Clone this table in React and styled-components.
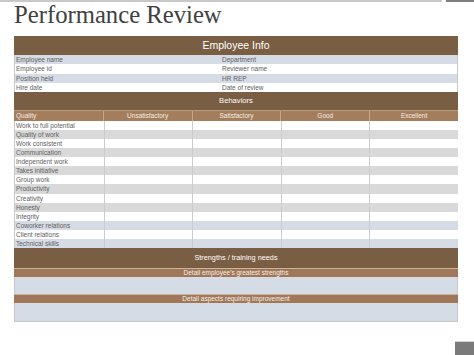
import React from 'react';
import styled, { createGlobalStyle } from 'styled-components';

const GlobalStyle = createGlobalStyle`
  body {
    margin: 0;
    background: #ffffff;
    font-family: "Liberation Sans", Arial, sans-serif;
  }
`;

const info = [
  ['Employee name', 'Department'],
  ['Employee id', 'Reviewer name'],
  ['Position held', 'HR REP'],
  ['Hire date', 'Date of review'],
];

const columns = ['Quality', 'Unsatisfactory', 'Satisfactory', 'Good', 'Excellent'];

const qualities = [
  ['Work to full potential', 'white'],
  ['Quality of work', 'gray'],
  ['Work consistent', 'white'],
  ['Communication', 'gray'],
  ['Independent work', 'white'],
  ['Takes initiative', 'gray'],
  ['Group work', 'white'],
  ['Productivity', 'gray'],
  ['Creativity', 'white'],
  ['Honesty', 'gray'],
  ['Integrity', 'white'],
  ['Coworker relations', 'blue'],
  ['Client relations', 'white'],
  ['Technical skills', 'blue'],
];

const shades = {
  white: '#ffffff',
  gray: '#d9d9d9',
  blue: '#d6dce5',
};

const App = () => {
  return (
    <Page>
      <GlobalStyle />
      <TopBar>
        <LightStrip />
        <DarkStrip />
      </TopBar>
      <Title>Performance Review</Title>
      <Sheet>
        <Banner $height={19} $size={10.5}>Employee Info</Banner>
        {info.map((row, i) => (
          <InfoRow key={row[0]} $alt={i % 2 === 0}>
            <InfoCell>{row[0]}</InfoCell>
            <InfoCell>{row[1]}</InfoCell>
          </InfoRow>
        ))}
        <Banner $height={18} $size={7.6}>Behaviors</Banner>
        <HeadRow>
          {columns.map((c, i) => (
            <HeadCell key={c} $first={i === 0}>{c}</HeadCell>
          ))}
        </HeadRow>
        {qualities.map(([q, shade]) => (
          <GridRow key={q} $shade={shades[shade]}>
            <Cell>{q}</Cell>
            <Cell />
            <Cell />
            <Cell />
            <Cell />
          </GridRow>
        ))}
        <Banner $height={19.5} $size={7.3}>Strengths / training needs</Banner>
        <SubBar>Detail employee's greatest strengths</SubBar>
        <Blank $height={17} />
        <SubBar>Detail aspects requiring improvement</SubBar>
        <Blank $height={18} />
      </Sheet>
      <Footer>
        <Corner />
      </Footer>
    </Page>
  );
};

const Page = styled.div`
  height: 355px;
  display: flex;
  flex-direction: column;
  overflow: hidden;
`;

const TopBar = styled.div`
  display: flex;
  height: 2px;
  gap: 4px;
`;

const LightStrip = styled.div`
  flex: 0 0 442px;
  background: #c8c8c8;
`;

const DarkStrip = styled.div`
  flex: 1;
  background: #7f7f7f;
`;

const Title = styled.h1`
  margin: 0 0 9px 14px;
  font-family: "Liberation Serif", "Times New Roman", serif;
  font-weight: normal;
  font-size: 24.7px;
  line-height: 25px;
  color: #404040;
`;

const Sheet = styled.div`
  margin-left: 14px;
  width: 444px;
  box-sizing: border-box;
  border-right: 1px solid #c8c8c8;
  border-bottom: 1px solid #c8c8c8;
  border-left: 1px solid #c8c8c8;
  display: flex;
  flex-direction: column;
`;

const Banner = styled.div`
  height: ${p => p.$height}px;
  line-height: ${p => p.$height}px;
  background: #7a5e44;
  color: #ffffff;
  text-align: center;
  font-size: ${p => p.$size}px;
  margin: 0 -1px;
`;

const InfoRow = styled.div`
  display: grid;
  grid-template-columns: 206px 1fr;
  height: 9.25px;
  background: ${p => (p.$alt ? '#d6dce5' : '#ffffff')};
`;

const InfoCell = styled.div`
  font-size: 6.5px;
  line-height: 9.25px;
  color: #606060;
  padding-left: 1px;
  white-space: nowrap;
`;

const HeadRow = styled.div`
  display: grid;
  grid-template-columns: repeat(5, 1fr);
  height: 10.5px;
  background: #a47e5c;
  border-top: 1px solid #b89a7e;
  box-sizing: border-box;
  margin: 0 -1px;
`;

const HeadCell = styled.div`
  font-size: 6.5px;
  line-height: 9.5px;
  color: #f4ece4;
  text-align: ${p => (p.$first ? 'left' : 'center')};
  padding-left: ${p => (p.$first ? '2px' : '0')};
  border-left: ${p => (p.$first ? 'none' : '1px solid #c2a88f')};
  white-space: nowrap;
`;

const GridRow = styled.div`
  display: grid;
  grid-template-columns: repeat(5, 1fr);
  height: 9.14px;
  background: ${p => p.$shade};
  margin: 0 -1px 0 0;
`;

const Cell = styled.div`
  font-size: 6.5px;
  line-height: 9.14px;
  color: #606060;
  padding-left: 1px;
  white-space: nowrap;
  & + & {
    border-left: 1px solid #cccccc;
  }
`;

const SubBar = styled.div`
  height: 9px;
  line-height: 8px;
  box-sizing: border-box;
  border-top: 1px solid #c9b39f;
  background: #a07859;
  color: #f6eee7;
  text-align: center;
  font-size: 6.5px;
  margin: 0 -1px;
`;

const Blank = styled.div`
  height: ${p => p.$height}px;
  background: #d6dce5;
`;

const Footer = styled.div`
  margin-top: auto;
  display: flex;
  justify-content: flex-end;
`;

const Corner = styled.div`
  width: 19px;
  height: 13px;
  background: #7a7a7a;
  border-top: 1px solid #d0d0d0;
  box-shadow: 0 -1px 0 #ffffff;
`;

export default App;
